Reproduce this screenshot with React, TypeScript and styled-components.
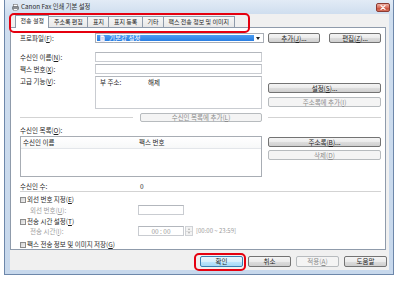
import React from 'react';
import styled, { createGlobalStyle } from 'styled-components';

const Global = createGlobalStyle`
  html, body { margin: 0; padding: 0; background: #fff; }
  body {
    font-family: "Noto Sans CJK KR", "Noto Sans", sans-serif;
    font-size: 6.5px;
    color: #1e1e1e;
    line-height: 1;
  }
`;

const Window = styled.div`
  position: relative;
  margin-left: 4px;
  width: 390px;
  height: 275px;
  box-sizing: border-box;
  border: 1px solid #6d87aa;
  border-top: none;
  background: linear-gradient(#e2ebf6, #cfdeef 14px, #c7d8ec);
  padding: 0 4px 4px 5px;
  display: flex;
  flex-direction: column;
`;

const TitleBar = styled.div`
  height: 14px;
  flex: none;
  display: flex;
  align-items: center;
  padding-left: 2px;
  gap: 2px;
`;

const TitleText = styled.span`
  font-size: 6.3px;
  color: #2a2a2a;
  white-space: nowrap;
`;

const CloseBtn = styled.div`
  margin-left: auto;
  margin-right: -1px;
  align-self: flex-start;
  margin-top: 3px;
  width: 14px;
  height: 9px;
  box-sizing: border-box;
  border: 1px solid #8b3b33;
  border-radius: 2px;
  background: linear-gradient(#eeb1a4, #d9705f 50%, #c84a37 51%, #d7725d);
  display: flex;
  align-items: center;
  justify-content: center;
`;

const Client = styled.div`
  flex: 1;
  background: #f0f0f0;
  display: flex;
  flex-direction: column;
  padding-top: 1px;
`;

const TabStrip = styled.div`
  display: flex;
  align-items: flex-end;
  height: 13px;
  padding-left: 5px;
  position: relative;
  z-index: 2;
  flex: none;
`;

const Tab = styled.div<{ $active?: boolean }>`
  box-sizing: border-box;
  height: ${p => (p.$active ? 13 : 11)}px;
  margin-bottom: ${p => (p.$active ? 0 : 1)}px;
  margin-left: -1px;
  padding: 0 4.5px ${p => (p.$active ? 2 : 0)}px;
  border: 1px solid #8f9bab;
  border-bottom: none;
  background: ${p => (p.$active ? '#fff' : 'linear-gradient(#f7f7f7, #e8e8e8)')};
  display: flex;
  align-items: center;
  font-size: 6px;
  white-space: nowrap;
  color: #222;
  &:first-child { margin-left: 0; }
`;

const TabPage = styled.div`
  flex: 1;
  margin: -1px 3px 0 0;
  background: #fff;
  border: 1px solid #8f9bab;
  padding: 5px 4px 0 9px;
  display: flex;
  flex-direction: column;
  position: relative;
  z-index: 1;
`;

const Row = styled.div<{ $mt?: number; $h: number; $top?: boolean }>`
  display: flex;
  align-items: ${p => (p.$top ? 'flex-start' : 'center')};
  margin-top: ${p => p.$mt ?? 0}px;
  height: ${p => p.$h}px;
  flex: none;
  white-space: nowrap;
`;

const Label = styled.div<{ $w?: number; $indent?: number; $disabled?: boolean; $pt?: number }>`
  width: ${p => p.$w ?? 75}px;
  flex: none;
  box-sizing: border-box;
  padding-left: ${p => p.$indent ?? 0}px;
  padding-top: ${p => p.$pt ?? 0}px;
  color: ${p => (p.$disabled ? '#9c9c9c' : '#1e1e1e')};
`;

const Key = styled.span`
  text-decoration: underline;
`;

const Input = styled.div<{ $w: number }>`
  width: ${p => p.$w}px;
  height: 10px;
  box-sizing: border-box;
  flex: none;
  border: 1px solid #c9ccd1;
  border-top-color: #b3b7bd;
  background: #fff;
  display: flex;
  align-items: center;
  justify-content: center;
  color: #9c9c9c;
`;

const Combo = styled.div`
  width: 169px;
  height: 10px;
  box-sizing: border-box;
  flex: none;
  border: 1px solid #a9aeb6;
  background: #fff;
  padding: 1px;
  display: flex;
`;

const ComboSel = styled.div`
  width: 157px;
  background: linear-gradient(#4b9df2, #2a7ee2);
  display: flex;
  align-items: center;
  gap: 4px;
  padding-left: 3px;
  box-sizing: border-box;
  color: #fff;
`;

const ComboArrow = styled.div`
  flex: 1;
  display: flex;
  align-items: center;
  justify-content: center;
  &::after {
    content: '';
    border-left: 2.5px solid transparent;
    border-right: 2.5px solid transparent;
    border-top: 3px solid #222;
  }
`;

const Side = styled.div<{ $ml?: number; $pt?: number; $gap?: number; $row?: boolean }>`
  margin-left: ${p => p.$ml ?? 6}px;
  flex: 1;
  display: flex;
  flex-direction: ${p => (p.$row ? 'row' : 'column')};
  gap: ${p => p.$gap ?? 0}px;
  padding-top: ${p => p.$pt ?? 0}px;
  align-self: stretch;
`;

const Btn = styled.div<{ $disabled?: boolean; $default?: boolean; $w?: number; $h?: number; $grow?: boolean }>`
  box-sizing: border-box;
  height: ${p => p.$h ?? 10}px;
  width: ${p => (p.$w ? `${p.$w}px` : 'auto')};
  flex: ${p => (p.$grow ? '1' : 'none')};
  border: 1px solid ${p => (p.$disabled ? '#b7bbbe' : p.$default ? '#3c7fb1' : '#737373')};
  border-radius: 2px;
  background: ${p =>
    p.$disabled
      ? '#f4f4f4'
      : p.$default
      ? 'linear-gradient(#eaf6fd, #d9f0fc 50%, #bee6fd 51%, #a7d9f5)'
      : 'linear-gradient(#f4f4f4, #ebebeb 50%, #dddddd 51%, #cfcfcf)'};
  color: ${p => (p.$disabled ? '#8c8c8c' : '#1e1e1e')};
  display: flex;
  align-items: center;
  justify-content: center;
  white-space: nowrap;
`;

const AdvBox = styled.div`
  width: 167px;
  height: 33px;
  box-sizing: border-box;
  flex: none;
  border: 1px solid #c9ccd1;
  border-top-color: #b3b7bd;
  padding: 2px 0 0 4px;
  display: flex;
  align-items: flex-start;
`;

const AdvKey = styled.span`
  width: 48px;
  flex: none;
`;

const HLine = styled.div<{ $w?: number }>`
  height: 1px;
  width: ${p => (p.$w ? `${p.$w}px` : 'auto')};
  flex: ${p => (p.$w ? 'none' : '1')};
  background: #d3d3d3;
`;

const SideLine = styled.div`
  margin-left: 6px;
  flex: 1;
  height: 1px;
  background: #d3d3d3;
`;

const Divider = styled.div`
  margin-top: 1px;
  height: 1px;
  background: #d3d3d3;
  flex: none;
`;

const ListBox = styled.div`
  width: 242px;
  height: 41px;
  box-sizing: border-box;
  flex: none;
  border: 1px solid #a8adb4;
  background: #fff;
`;

const ListHead = styled.div`
  height: 12px;
  display: flex;
  align-items: center;
  border-bottom: 1px solid #e3e6ea;
  background: linear-gradient(#fff, #f7f8f9);
  box-sizing: border-box;
`;

const HeadCell = styled.div<{ $w?: number }>`
  width: ${p => (p.$w ? `${p.$w}px` : 'auto')};
  flex: ${p => (p.$w ? 'none' : '1')};
  padding-left: 2px;
  box-sizing: border-box;
`;

const CheckBox = styled.div`
  width: 6px;
  height: 6px;
  box-sizing: border-box;
  flex: none;
  border: 1px solid #8c8c8c;
  background: linear-gradient(135deg, #d2d2d2, #f2f2f2);
  margin-right: 1px;
`;

const Spin = styled.div`
  width: 8px;
  height: 10px;
  box-sizing: border-box;
  margin-left: 1px;
  border: 1px solid #cfd2d6;
  display: flex;
  flex-direction: column;
  background: #f3f3f3;
`;

const SpinHalf = styled.div<{ $up?: boolean }>`
  flex: 1;
  display: flex;
  align-items: center;
  justify-content: center;
  &::after {
    content: '';
    border-left: 1.5px solid transparent;
    border-right: 1.5px solid transparent;
    ${p => (p.$up ? 'border-bottom: 2px solid #b0b0b0;' : 'border-top: 2px solid #b0b0b0;')}
  }
  & + & { border-top: 1px solid #dcdcdc; }
`;

const Hint = styled.span`
  margin-left: 3px;
  color: #9c9c9c;
  font-size: 6px;
`;

const ButtonRow = styled.div`
  flex: none;
  height: 11px;
  margin: 6px 2px 3px 0;
  display: flex;
  justify-content: flex-end;
  gap: 5px;
`;

const Highlight = styled.div<{ $l: number; $t: number; $w: number; $h: number }>`
  position: absolute;
  left: ${p => p.$l}px;
  top: ${p => p.$t}px;
  width: ${p => p.$w}px;
  height: ${p => p.$h}px;
  box-sizing: border-box;
  border: 2px solid #e5000f;
  border-radius: 5px;
  z-index: 5;
  pointer-events: none;
`;

const FaxIcon = () => (
  <svg width="7" height="7" viewBox="0 0 7 7">
    <rect x="1.5" y="0.5" width="4" height="2.5" fill="#fff" stroke="#777" strokeWidth="0.6" />
    <rect x="0.5" y="2.5" width="6" height="3" rx="0.5" fill="#8a8f96" stroke="#555" strokeWidth="0.5" />
    <rect x="1.5" y="4.8" width="4" height="1.6" fill="#fff" stroke="#777" strokeWidth="0.5" />
  </svg>
);

const DocIcon = () => (
  <svg width="5" height="7" viewBox="0 0 5 7">
    <path d="M0.5 0.5 H3.3 L4.5 1.7 V6.5 H0.5 Z" fill="#fff" stroke="#d9d9f5" strokeWidth="0.5" />
    <path d="M1.2 2.5 H3.8 M1.2 3.7 H3.8 M1.2 4.9 H3.8" stroke="#9aa4d8" strokeWidth="0.5" />
  </svg>
);

const CloseGlyph = () => (
  <svg width="6" height="5" viewBox="0 0 6 5">
    <path d="M1 0.6 L5 4.4 M5 0.6 L1 4.4" stroke="#fff" strokeWidth="1.2" strokeLinecap="round" />
  </svg>
);

const tabs = ['전송 설정', '주소록 편집', '표지', '표지 등록', '기타', '팩스 전송 정보 및 이미지'];

export default function App() {
  return (
    <>
      <Global />
      <Window>
        <TitleBar>
          <FaxIcon />
          <TitleText>Canon Fax 인쇄 기본 설정</TitleText>
          <CloseBtn>
            <CloseGlyph />
          </CloseBtn>
        </TitleBar>
        <Client>
          <TabStrip>
            {tabs.map((t, i) => (
              <Tab key={t} $active={i === 0}>
                {t}
              </Tab>
            ))}
          </TabStrip>
          <TabPage>
            <Row $h={10}>
              <Label>프로파일(<Key>F</Key>):</Label>
              <Combo>
                <ComboSel>
                  <DocIcon />
                  <span>기본값 설정</span>
                </ComboSel>
                <ComboArrow />
              </Combo>
              <Side $ml={4} $row $gap={9}>
                <Btn $grow>추가(<Key>J</Key>)...</Btn>
                <Btn $grow>편집(<Key>Z</Key>)...</Btn>
              </Side>
            </Row>

            <Row $mt={9} $h={10}>
              <Label>수신인 이름(<Key>N</Key>):</Label>
              <Input $w={167} />
            </Row>
            <Row $mt={2} $h={10}>
              <Label>팩스 번호(<Key>X</Key>):</Label>
              <Input $w={167} />
            </Row>
            <Row $mt={2} $h={33} $top>
              <Label $pt={2}>고급 기능(<Key>V</Key>):</Label>
              <AdvBox>
                <AdvKey>부 주소:</AdvKey>
                <span>해제</span>
              </AdvBox>
              <Side $pt={7} $gap={4}>
                <Btn>설정(<Key>S</Key>)...</Btn>
                <Btn $disabled>주소록에 추가(<Key>I</Key>)</Btn>
              </Side>
            </Row>

            <Row $mt={4} $h={9}>
              <HLine $w={113} />
              <Btn $w={122} $h={9} $disabled style={{ marginLeft: 7 }}>
                수신인 목록에 추가(<Key>L</Key>)
              </Btn>
              <SideLine />
            </Row>

            <Row $mt={4} $h={8}>
              <Label $w={120}>수신인 목록(<Key>O</Key>):</Label>
            </Row>
            <Row $mt={2} $h={41} $top>
              <ListBox>
                <ListHead>
                  <HeadCell $w={116}>수신인 이름</HeadCell>
                  <HeadCell>팩스 번호</HeadCell>
                </ListHead>
              </ListBox>
              <Side $pt={1} $gap={3}>
                <Btn>주소록(<Key>B</Key>)...</Btn>
                <Btn $disabled>삭제(<Key>D</Key>)</Btn>
              </Side>
            </Row>

            <Row $mt={5} $h={8}>
              <Label $w={120}>수신인 수:</Label>
              <span>0</span>
            </Row>
            <Divider />

            <Row $mt={4} $h={7}>
              <CheckBox />
              <span>외선 번호 지정(<Key>E</Key>)</span>
            </Row>
            <Row $mt={2} $h={10}>
              <Label $w={118} $indent={10} $disabled>
                외선 번호(<Key>U</Key>):
              </Label>
              <Input $w={46} />
            </Row>
            <Row $mt={3} $h={7}>
              <CheckBox />
              <span>전송 시간 설정(<Key>T</Key>)</span>
            </Row>
            <Row $mt={1} $h={10}>
              <Label $w={118} $indent={10} $disabled>
                전송 시간(<Key>I</Key>):
              </Label>
              <Input $w={46}>00 : 00</Input>
              <Spin>
                <SpinHalf $up />
                <SpinHalf />
              </Spin>
              <Hint>[00:00 ~ 23:59]</Hint>
            </Row>
            <Row $mt={5} $h={7}>
              <CheckBox />
              <span>팩스 전송 정보 및 이미지 저장(<Key>G</Key>)</span>
            </Row>
          </TabPage>
          <ButtonRow>
            <Btn $w={43} $h={11} $default>확인</Btn>
            <Btn $w={43} $h={11}>취소</Btn>
            <Btn $w={43} $h={11} $disabled>적용(<Key>A</Key>)</Btn>
            <Btn $w={43} $h={11}>도움말</Btn>
          </ButtonRow>
        </Client>
        <Highlight $l={4} $t={13} $w={241} $h={20} />
        <Highlight $l={189} $t={253} $w={52} $h={18} />
      </Window>
    </>
  );
}
